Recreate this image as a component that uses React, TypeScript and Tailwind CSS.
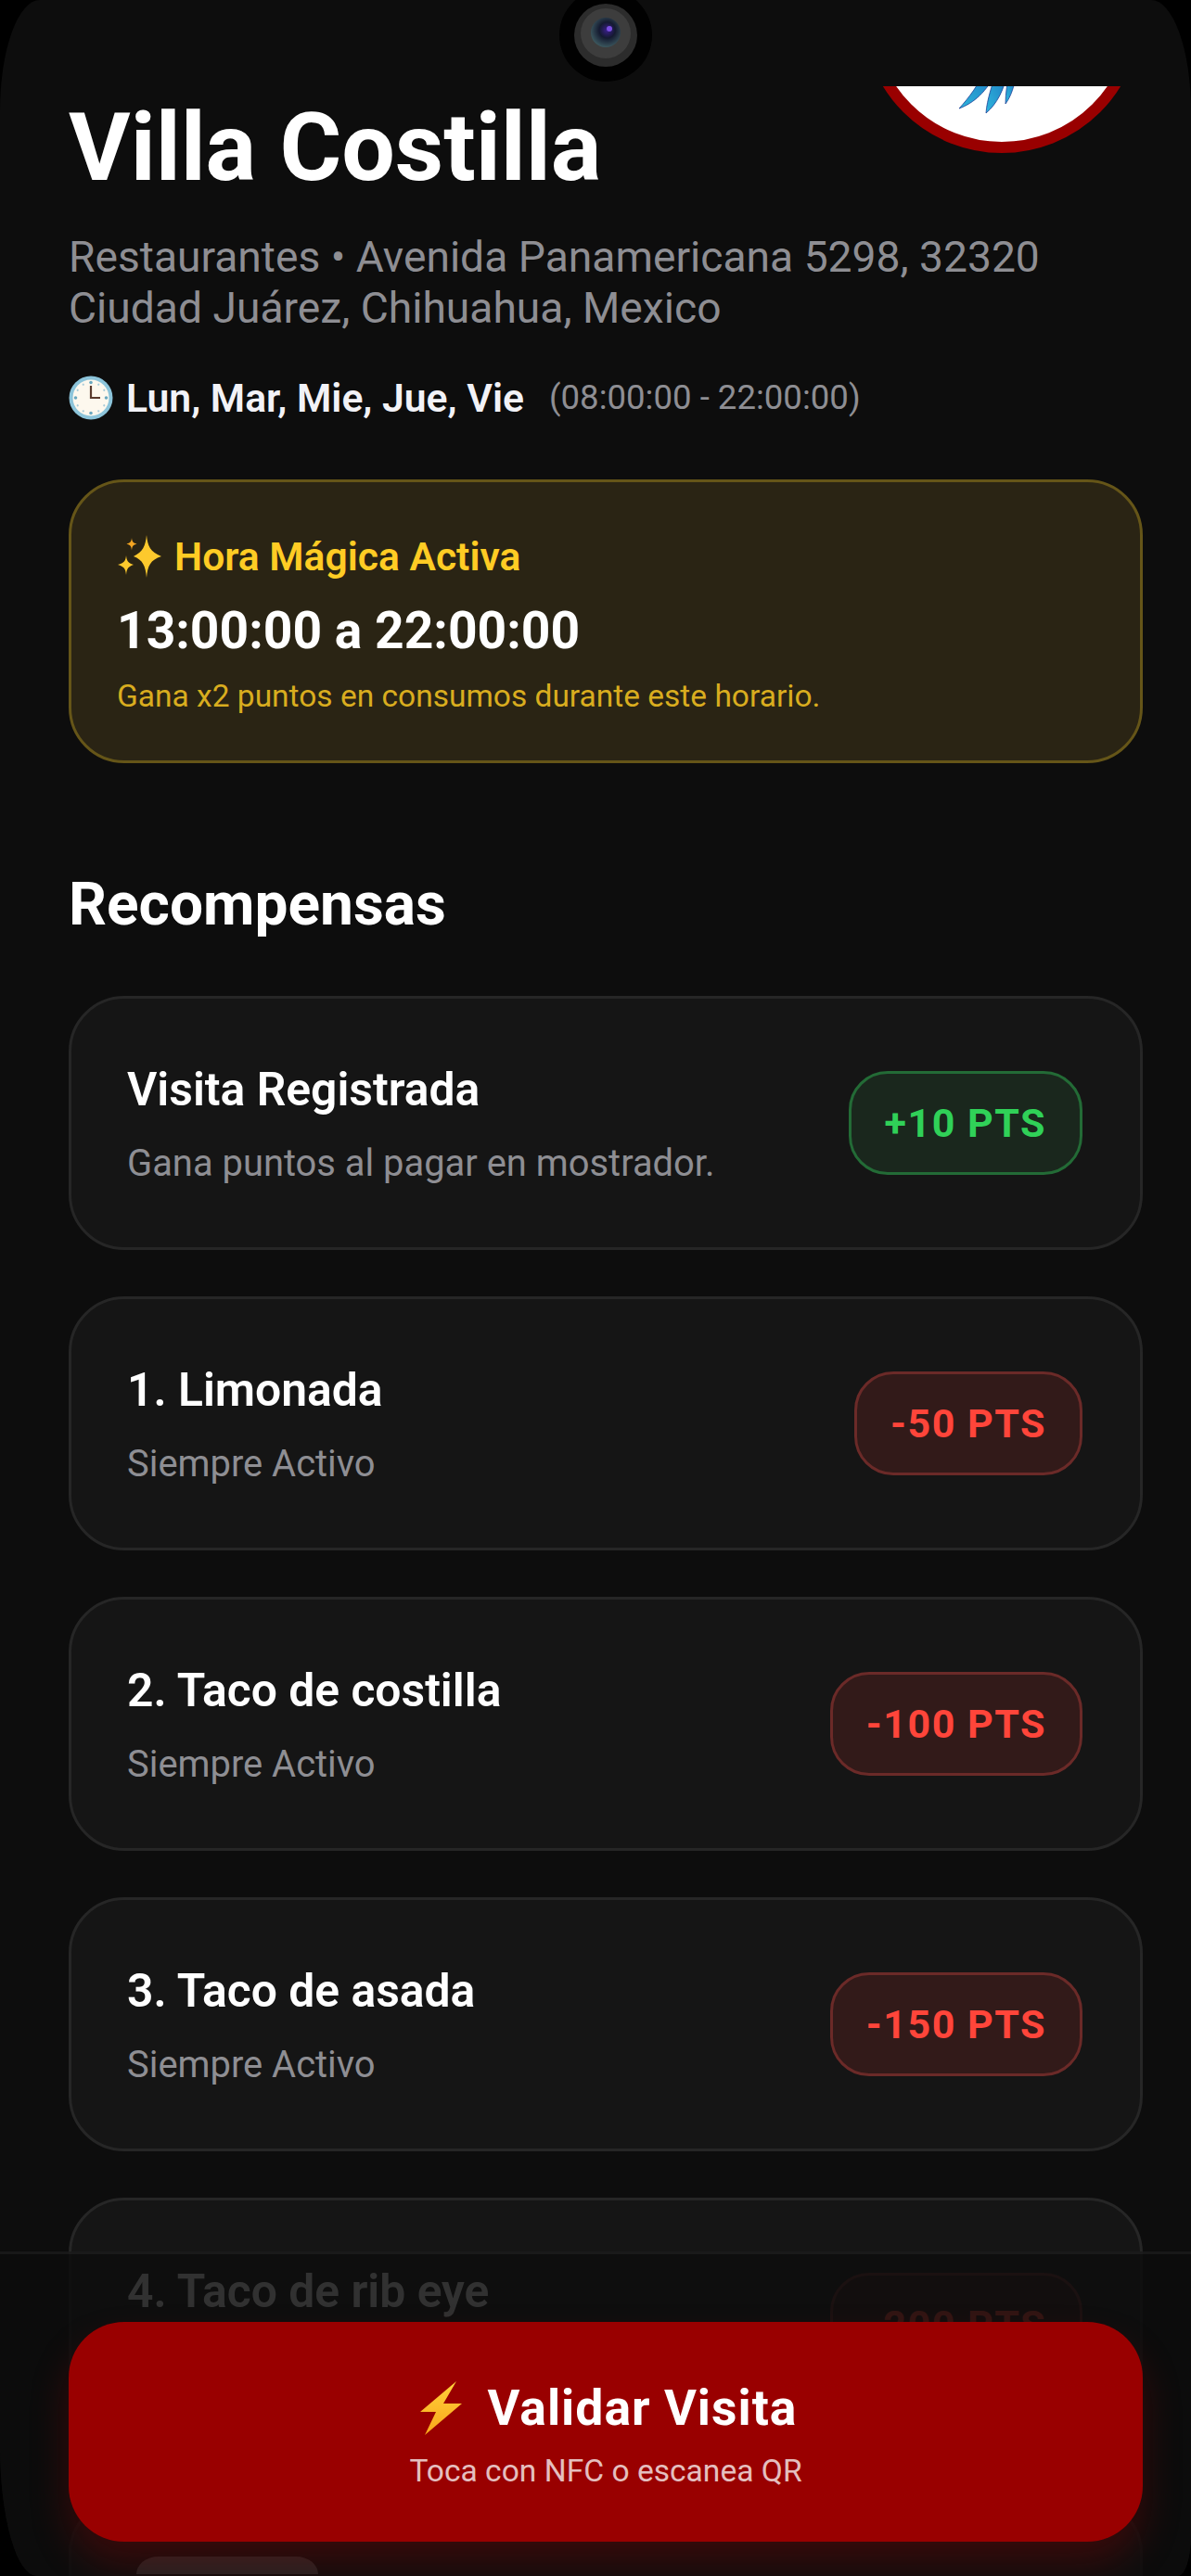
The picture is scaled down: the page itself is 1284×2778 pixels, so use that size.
const rewards = [
  { title: "Visita Registrada", note: "Gana puntos al pagar en mostrador.", pts: "+10 PTS", earn: true },
  { title: "1. Limonada", note: "Siempre Activo", pts: "-50 PTS", earn: false },
  { title: "2. Taco de costilla", note: "Siempre Activo", pts: "-100 PTS", earn: false },
  { title: "3. Taco de asada", note: "Siempre Activo", pts: "-150 PTS", earn: false },
  { title: "4. Taco de rib eye", note: "Siempre Activo", pts: "-200 PTS", earn: false },
];

const ClockIcon = () => (
  <svg viewBox="0 0 48 48" className="w-[48px] h-[48px] shrink-0">
    <circle cx="24" cy="24" r="23.5" fill="#8cc4da" />
    <circle cx="24" cy="24" r="19.5" fill="#fdf8ee" />
    {[0, 30, 60, 90, 120, 150, 180, 210, 240, 270, 300, 330].map((a) => (
      <circle key={a} cx="24" cy="7.5" r={a % 90 === 0 ? 1.8 : 1.1} fill={a % 90 === 0 ? "#6aa8c0" : "#a9cbd8"} transform={`rotate(${a} 24 24)`} />
    ))}
    <path d="M24 11v13h10" fill="none" stroke="#5a3a2e" strokeWidth="2.2" />
  </svg>
);

const SparkleIcon = () => (
  <svg viewBox="0 0 48 46" className="w-[48px] h-[46px] shrink-0">
    <path d="M32 0c1.2 12 4 18 16 23-12 4-14.800 10-16 23-1.200-13-4-19-14-23 10-5 12.800-11 14-23z" fill="#fdc92d" />
    <path d="M10 22c.6 6 2 8 8 10-6 2-7.400 4.500-8 11-.6-6.500-2-9-9-11 7-2 8.400-4 9-10z" fill="#fdc92d" />
    <path d="M16 3c.4 4 1.400 5.500 5.500 6.500-4 1-5.100 2.500-5.500 7-.4-4.500-1.500-6-5.500-7 4-1 5.100-2.500 5.500-6.500z" fill="#f5a623" />
  </svg>
);

const BoltIcon = () => (
  <svg viewBox="0 0 45 58" className="w-[45px] h-[58px] shrink-0">
    <defs>
      <linearGradient id="bolt" x1="0" y1="0" x2="0" y2="1">
        <stop offset="0" stopColor="#ffd23c" />
        <stop offset="1" stopColor="#f9a61a" />
      </linearGradient>
    </defs>
    <path d="M39 0 0 33h17L5 58l40-34H25z" fill="url(#bolt)" />
  </svg>
);

const Camera = () => (
  <svg viewBox="0 0 100 100" className="absolute left-[603px] top-[-12px] w-[100px] h-[100px]">
    <defs>
      <radialGradient id="lens" cx="0.55" cy="0.42" r="0.6">
        <stop offset="0" stopColor="#3a1f8a" />
        <stop offset="0.45" stopColor="#141a30" />
        <stop offset="1" stopColor="#3d5a60" />
      </radialGradient>
    </defs>
    <circle cx="50" cy="50" r="50" fill="#010101" />
    <circle cx="50" cy="50" r="34" fill="#2c2c2c" />
    <circle cx="50" cy="48" r="27" fill="#3d3d3d" />
    <circle cx="50" cy="47" r="16" fill="url(#lens)" />
    <circle cx="54" cy="43" r="3" fill="#7a4fe0" />
  </svg>
);

const Logo = () => (
  <div className="relative w-[300px] h-[300px] shrink-0 -mt-[228px] -ml-[2px] mr-[2px] rounded-full bg-white border-[12px] border-[#990000]">
    <svg viewBox="0 0 276 276" className="absolute inset-0 w-[276px] h-[276px]">
      <defs>
        <linearGradient id="feather" x1="0" y1="1" x2="1" y2="0">
          <stop offset="0" stopColor="#2fb6dd" />
          <stop offset="1" stopColor="#1c78c0" />
        </linearGradient>
      </defs>
      <path d="M92 240c16-6 30-18 40-40l-13 0c-6 14-16 28-27 40z" fill="url(#feather)" stroke="#1d3f96" strokeWidth="0.8" />
      <path d="M121 245c12-10 20-26 23-45l-12 0c-4 14-10 30-11 45z" fill="url(#feather)" stroke="#1d3f96" strokeWidth="0.8" />
      <path d="M142 235c6-8 10-20 12-35l-8 0c-2 12-4 24-4 35z" fill="url(#feather)" stroke="#1d3f96" strokeWidth="0.8" />
    </svg>
  </div>
);

const RewardCard = ({ title, note, pts, earn }: (typeof rewards)[number]) => (
  <div className="h-[274px] rounded-[60px] border-[3px] border-[#262626] bg-[#151515] pl-[60px] pr-[62px] flex items-center justify-between">
    <div className="pt-[5px]">
      <h3 className="text-[49.800px] leading-[54px] font-semibold text-white">{title}</h3>
      <p className="mt-[29px] text-[39.900px] leading-[48px] text-[#8e8e93]">{note}</p>
    </div>
    <span
      className={
        earn
          ? "h-[112px] px-[36px] flex items-center rounded-[42px] border-[3px] border-[#236b36] bg-[#1a271d] text-[43px] font-bold tracking-[1.5px] text-[#30d158]"
          : "h-[112px] px-[36px] flex items-center rounded-[42px] border-[3px] border-[#6b2a28] bg-[#321a19] text-[43px] font-bold tracking-[1.5px] text-[#ff453a]"
      }
    >
      {pts}
    </span>
  </div>
);

export default function App() {
  return (
    <div className="relative w-[1284px] h-[2778px] bg-black overflow-hidden font-['Roboto',sans-serif]">
      <div className="relative w-full h-full bg-[#0d0d0d] overflow-hidden flex flex-col rounded-tl-[43px_120px] rounded-tr-[43px_120px] rounded-bl-[40px_140px] rounded-br-[14px_45px]">
        <div className="h-[93px] shrink-0" />
        <Camera />

        <main className="flex-1 overflow-hidden pl-[74px] pr-[52px]">
          <div className="flex justify-between items-start">
            <h1 className="mt-[10px] text-[102px] leading-[112px] font-bold text-white">Villa Costilla</h1>
            <Logo />
          </div>

          <p className="mt-[35px] text-[46.200px] leading-[55px] text-[#8e8e93]">
            Restaurantes • Avenida Panamericana 5298, 32320
            <br />
            Ciudad Juárez, Chihuahua, Mexico
          </p>

          <div className="mt-[43px] flex items-center gap-[14px]">
            <ClockIcon />
            <span className="text-[42.700px] leading-[52px] font-semibold text-[#f2f2f7]">Lun, Mar, Mie, Jue, Vie</span>
            <span className="ml-[13px] text-[36.600px] leading-[52px] text-[#8e8e93]">(08:00:00 - 22:00:00)</span>
          </div>

          <section className="mt-[62px] h-[306px] rounded-[60px] border-[3px] border-[#655518] bg-[#2a2414] pl-[49px] pr-[48px] pt-[55px]">
            <div className="flex items-center gap-[14px] h-[50px]">
              <SparkleIcon />
              <span className="text-[42.600px] leading-[50px] font-semibold text-[#ffcc24]">Hora Mágica Activa</span>
            </div>
            <p className="mt-[23px] text-[55.200px] leading-[64px] font-bold text-white">13:00:00 a 22:00:00</p>
            <p className="mt-[19px] text-[33.500px] leading-[40px] text-[#d9ad1f]">Gana x2 puntos en consumos durante este horario.</p>
          </section>

          <h2 className="mt-[118px] text-[64px] leading-[70px] font-bold text-white">Recompensas</h2>

          <div className="mt-[63px] flex flex-col gap-[50px]">
            {rewards.map((r) => (
              <RewardCard key={r.title} {...r} />
            ))}
            <div className="h-[274px] rounded-[60px] border-[3px] border-[#262626] bg-[#151515] px-[70px] pt-[60px]">
              <div className="w-[196px] h-[19px] rounded-t-[24px_19px] bg-white/60" />
            </div>
          </div>
        </main>

        <footer className="absolute inset-x-0 bottom-0 h-[350px] border-t-[3px] border-white/5 bg-[#0d0d0d]/85 pl-[74px] pr-[52px] pt-[73px]">
          <button className="w-full h-[237px] pt-[6px] rounded-[60px] bg-[#990000] shadow-[0_24px_40px_rgba(153,0,0,0.3)] flex flex-col items-center justify-center">
            <span className="ml-[6px] flex items-center gap-[28px] text-[53.500px] leading-[60px] font-bold tracking-[1px] text-white">
              <BoltIcon />
              Validar Visita
            </span>
            <span className="mt-[18px] text-[33.600px] leading-[40px] text-white/75">Toca con NFC o escanea QR</span>
          </button>
        </footer>
      </div>
    </div>
  );
}
